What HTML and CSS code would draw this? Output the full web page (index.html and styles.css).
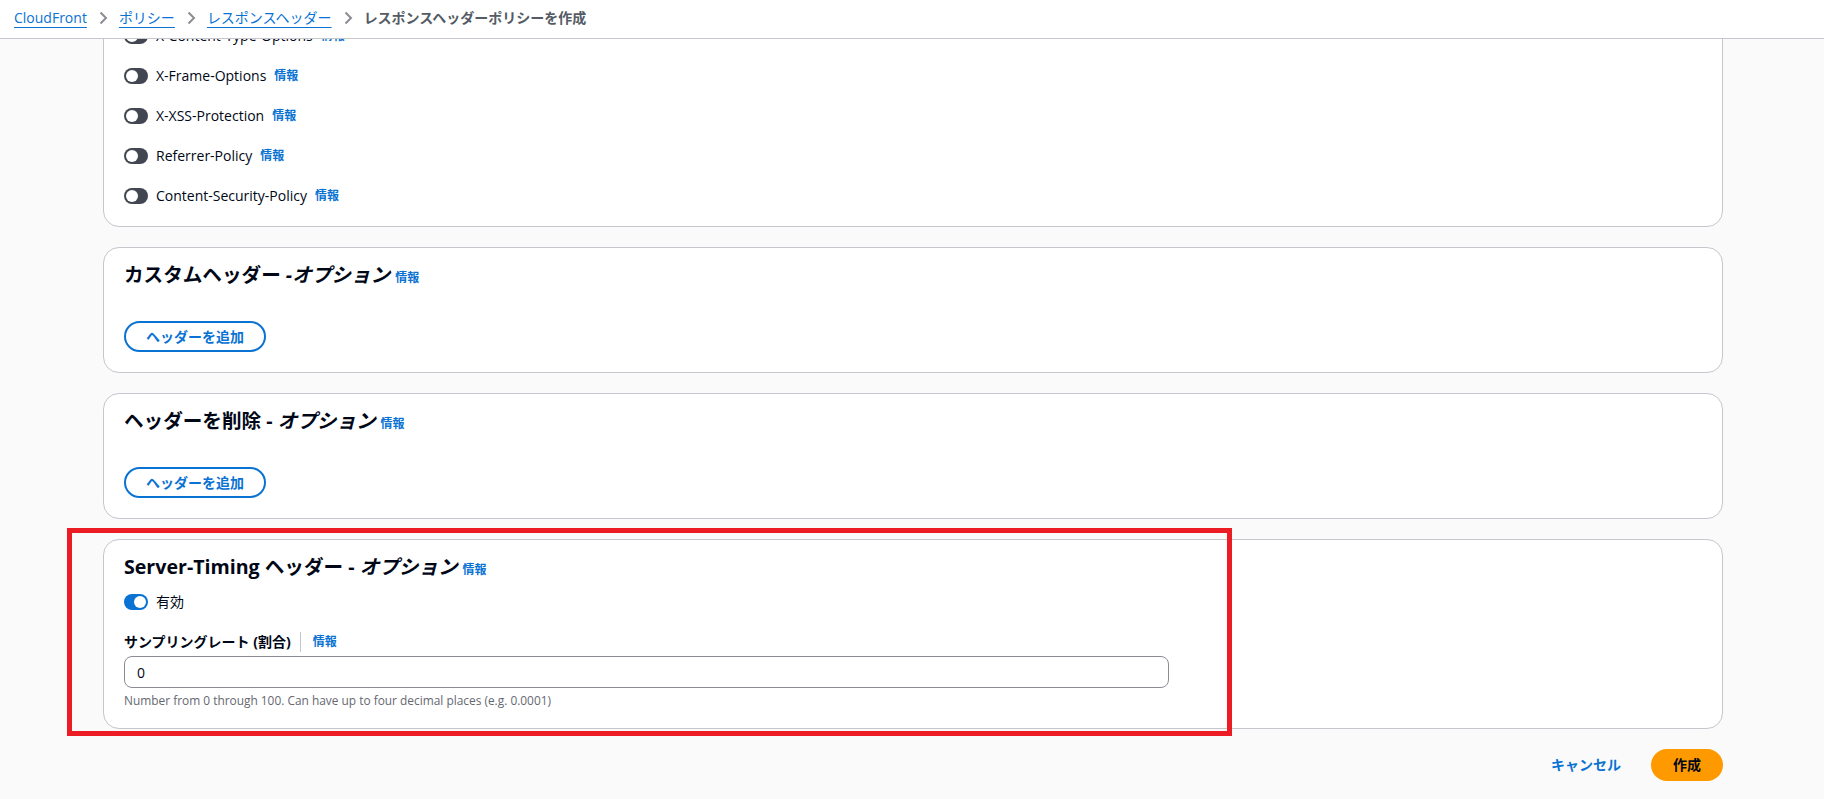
FILE: index.html
```html
<!DOCTYPE html>
<html lang="ja">
<head>
<meta charset="utf-8">
<title>レスポンスヘッダーポリシーを作成</title>
<link rel="stylesheet" href="styles.css">
</head>
<body>
<header class="topbar">
  <nav class="crumbs" aria-label="Breadcrumbs">
    <a class="crumb-link" href="#">CloudFront</a>
    <span class="sep"><svg viewBox="0 0 16 16" width="16" height="16"><path d="M5.5 2.5 11 8l-5.5 5.5" fill="none" stroke="#8c8c94" stroke-width="2"/></svg></span>
    <a class="crumb-link" href="#">ポリシー</a>
    <span class="sep"><svg viewBox="0 0 16 16" width="16" height="16"><path d="M5.5 2.5 11 8l-5.5 5.5" fill="none" stroke="#8c8c94" stroke-width="2"/></svg></span>
    <a class="crumb-link" href="#">レスポンスヘッダー</a>
    <span class="sep"><svg viewBox="0 0 16 16" width="16" height="16"><path d="M5.5 2.5 11 8l-5.5 5.5" fill="none" stroke="#8c8c94" stroke-width="2"/></svg></span>
    <span class="crumb-current">レスポンスヘッダーポリシーを作成</span>
  </nav>
</header>

<main class="content">
  <div class="stack">
    <section class="card card-scrolled">
      <div class="toggle-list">
        <div class="toggle-row"><span class="switch"></span><span>X-Content-Type-Options</span><a class="info" href="#">情報</a></div>
        <div class="toggle-row"><span class="switch"></span><span>X-Frame-Options</span><a class="info" href="#">情報</a></div>
        <div class="toggle-row"><span class="switch"></span><span>X-XSS-Protection</span><a class="info" href="#">情報</a></div>
        <div class="toggle-row"><span class="switch"></span><span>Referrer-Policy</span><a class="info" href="#">情報</a></div>
        <div class="toggle-row"><span class="switch"></span><span>Content-Security-Policy</span><a class="info" href="#">情報</a></div>
      </div>
    </section>

    <section class="card">
      <div class="card-head spaced">
        <h2>カスタムヘッダー <i>-オプション</i></h2>
        <a class="info" href="#">情報</a>
      </div>
      <button class="btn-outline" type="button">ヘッダーを追加</button>
    </section>

    <section class="card">
      <div class="card-head spaced">
        <h2>ヘッダーを削除 - <i>オプション</i></h2>
        <a class="info" href="#">情報</a>
      </div>
      <button class="btn-outline" type="button">ヘッダーを追加</button>
    </section>

    <section class="card">
      <div class="card-head">
        <h2>Server-Timing ヘッダー - <i>オプション</i></h2>
        <a class="info" href="#">情報</a>
      </div>
      <div class="toggle-row enabled-row"><span class="switch on"></span><span>有効</span></div>
      <div class="field">
        <div class="field-label-row">
          <label class="field-label" for="sampling">サンプリングレート (割合)</label>
          <a class="info field-info" href="#">情報</a>
        </div>
        <input id="sampling" class="text-input" type="text" value="0">
        <div class="hint">Number from 0 through 100. Can have up to four decimal places (e.g. 0.0001)</div>
      </div>
    </section>

    <div class="actions">
      <button class="btn-link" type="button">キャンセル</button>
      <button class="btn-primary" type="button">作成</button>
    </div>
  </div>

  <div class="callout"></div>
</main>
</body>
</html>
```

FILE: styles.css
```css
* {
  box-sizing: border-box;
}

html, body {
  height: 100%;
}

body {
  margin: 0;
  display: flex;
  flex-direction: column;
  overflow: hidden;
  background: #fafafa;
  color: #000716;
  font-family: "Open Sans", "Noto Sans CJK JP", sans-serif;
  font-size: 14px;
  line-height: 20px;
}

/* Top breadcrumb bar */
.topbar {
  flex: none;
  height: 39px;
  background: #ffffff;
  border-bottom: 1px solid #c6c6cd;
  display: flex;
  align-items: center;
  padding: 0 0 2px 14px;
}

.crumbs {
  display: flex;
  align-items: center;
}

.crumb-link {
  color: #0972d3;
  text-decoration: underline;
  text-underline-offset: 4px;
  text-decoration-thickness: 1px;
}

.sep {
  display: flex;
  margin: 0 8px;
}

.crumb-current {
  color: #545b64;
  font-weight: 700;
}

/* Scrolling content area */
.content {
  flex: 1;
  position: relative;
  overflow: hidden;
  padding: 0 101px 0 103px;
}

.stack {
  display: flex;
  flex-direction: column;
  gap: 20px;
}

.card {
  background: #ffffff;
  border: 1px solid #c6c6cd;
  border-radius: 16px;
  padding: 0 20px 20px;
  display: flex;
  flex-direction: column;
  align-items: flex-start;
}

.card-scrolled {
  margin-top: -34px;
  padding-top: 20px;
}

.toggle-list {
  display: flex;
  flex-direction: column;
  gap: 20px;
}

.toggle-row {
  display: flex;
  align-items: center;
  gap: 8px;
  height: 20px;
}

.switch {
  position: relative;
  flex: none;
  width: 24px;
  height: 16px;
  border-radius: 8px;
  background: #424650;
}

.switch::after {
  content: "";
  position: absolute;
  top: 2px;
  left: 2px;
  width: 12px;
  height: 12px;
  border-radius: 50%;
  background: #ffffff;
}

.switch.on {
  background: #0972d3;
}

.switch.on::after {
  left: 10px;
}

.info {
  color: #0972d3;
  font-size: 12px;
  font-weight: 700;
  text-decoration: none;
}

/* Container headers */
.card-head {
  padding-top: 13px;
  display: flex;
  align-items: baseline;
  gap: 5px;
}

.card-head.spaced {
  margin-bottom: 32px;
}

.card-head h2 {
  margin: 0;
  font-size: 19.6px;
  line-height: 28px;
  font-weight: 700;
}

.btn-outline {
  font-family: inherit;
  font-size: 14px;
  font-weight: 700;
  line-height: 19px;
  color: #0972d3;
  background: #ffffff;
  border: 2px solid #0972d3;
  border-radius: 20px;
  padding: 4px 20px;
}

.enabled-row {
  margin-top: 11px;
}

/* Form field */
.field {
  margin-top: 20px;
  display: flex;
  flex-direction: column;
}

.field-label-row {
  display: flex;
  align-items: center;
}

.field-label {
  font-weight: 700;
  padding-right: 9px;
  border-right: 1px solid #c6c6cd;
}

.field-info {
  padding-left: 12px;
}

.text-input {
  margin-top: 4px;
  width: 1045px;
  height: 32px;
  border: 1px solid #8c8c94;
  border-radius: 8px;
  padding: 0 12px;
  background: #ffffff;
  color: #000716;
  font-family: inherit;
  font-size: 14px;
}

.hint {
  margin-top: 4px;
  font-size: 11.9px;
  line-height: 16px;
  color: #656871;
}

/* Footer actions */
.actions {
  display: flex;
  justify-content: flex-end;
  align-items: center;
  gap: 8px;
}

.btn-link,
.btn-primary {
  font-family: inherit;
  font-size: 14px;
  font-weight: 700;
  line-height: 20px;
  border-radius: 20px;
  padding: 4px 20px;
}

.btn-link {
  background: none;
  border: 2px solid transparent;
  color: #0972d3;
}

.btn-primary {
  background: #ff9900;
  border: 2px solid #ff9900;
  color: #000716;
}

/* Highlight frame drawn over the Server-Timing section */
.callout {
  position: absolute;
  left: 67px;
  top: 489px;
  width: 1165px;
  height: 208px;
  border: 5px solid #ec1c24;
  pointer-events: none;
}
```
